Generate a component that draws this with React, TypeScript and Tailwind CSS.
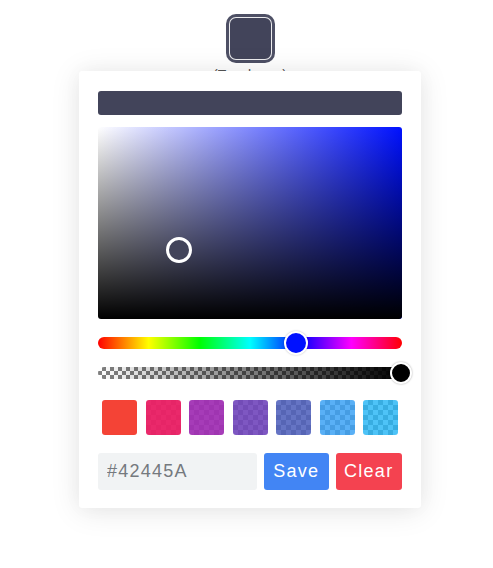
import React from "react";

const swatches = [
  "rgba(244,67,54,1)",
  "rgba(233,30,99,0.95)",
  "rgba(156,39,176,0.9)",
  "rgba(103,58,183,0.85)",
  "rgba(63,81,181,0.8)",
  "rgba(33,150,243,0.75)",
  "rgba(3,169,244,0.7)",
];

export default function App() {
  return (
    <div className="relative h-[568px] w-full bg-white" style={{ fontFamily: '"Liberation Sans", Arial, sans-serif' }}>
      <div className="ml-[79px] flex w-[342px] flex-col items-center pt-[14px]">
        <button className="h-[49px] w-[49px] rounded-[10px] bg-[#4e5065] p-[3px]">
          <div className="h-full w-full rounded-[7px] border border-white/90 bg-[#42445A]" />
        </button>
        <div className="mt-[5px] text-[14px] leading-[14px] text-[#555]">(Toggle me)</div>
      </div>

      <div className="absolute left-[79px] top-[71px] w-[342px] rounded-[3px] bg-white px-[19px] pb-[18px] pt-[20px] shadow-[0_3px_30px_0_rgba(0,0,0,0.1),0_0_20px_0_rgba(0,0,0,0.03)]">
        <div className="h-[24px] w-full rounded-[3px] bg-[#42445A]" />

        <div className="relative mt-[12px] h-[192px] w-full overflow-hidden rounded-[3px] bg-[linear-gradient(to_right,#fff,#0011ff)]">
          <div className="h-full w-full bg-[linear-gradient(to_top,#000,rgba(0,0,0,0))]" />
          <div className="absolute left-[68px] top-[110px] h-[26px] w-[26px] rounded-full border-[3px] border-white bg-[#42445A]" />
        </div>

        <div className="relative mt-[18px] h-[12px] w-full rounded-full bg-[linear-gradient(to_right,#f00,#ff0,#0f0,#0ff,#00f,#f0f,#f00)]">
          <div className="absolute left-[186px] top-[-6px] h-[24px] w-[24px] rounded-full border-2 border-white bg-[#0011ff] shadow-[0_0_2px_rgba(0,0,0,0.25)]" />
        </div>

        <div className="relative mt-[18px] h-[12px] w-full rounded-full bg-[repeating-conic-gradient(#808080_0_25%,#fff_0_50%)] bg-[length:8px_8px]">
          <div className="h-full w-full rounded-full bg-[linear-gradient(to_right,rgba(0,0,0,0),#000)]" />
          <div className="absolute left-[292px] top-[-5px] h-[22px] w-[22px] rounded-full border-2 border-white bg-black shadow-[0_0_2px_rgba(0,0,0,0.35)]" />
        </div>

        <div className="mt-[21px] flex justify-between px-[4px]">
          {swatches.map((c) => (
            <div
              key={c}
              className="h-[35px] w-[35px] overflow-hidden rounded-[3px] bg-[repeating-conic-gradient(#b4b4b4_0_25%,#fff_0_50%)] bg-[length:10px_10px]"
            >
              <div className="h-full w-full" style={{ background: c }} />
            </div>
          ))}
        </div>

        <div className="mt-[18px] flex h-[37px] gap-[7px]">
          <input
            readOnly
            value="#42445A"
            className="h-full w-[159px] rounded-[3px] bg-[#f1f3f4] px-[9px] text-[18px] tracking-[0.07em] text-[#75797e] outline-none"
            style={{ fontFamily: '"Liberation Sans", Arial, sans-serif' }}
          />
          <button className="h-full w-[65px] rounded-[3px] bg-[#4285f4] text-[18px] tracking-[0.07em] text-white">
            Save
          </button>
          <button className="h-full w-[67px] rounded-[3px] bg-[#f44250] text-[18px] tracking-[0.07em] text-white">
            Clear
          </button>
        </div>
      </div>
    </div>
  );
}
